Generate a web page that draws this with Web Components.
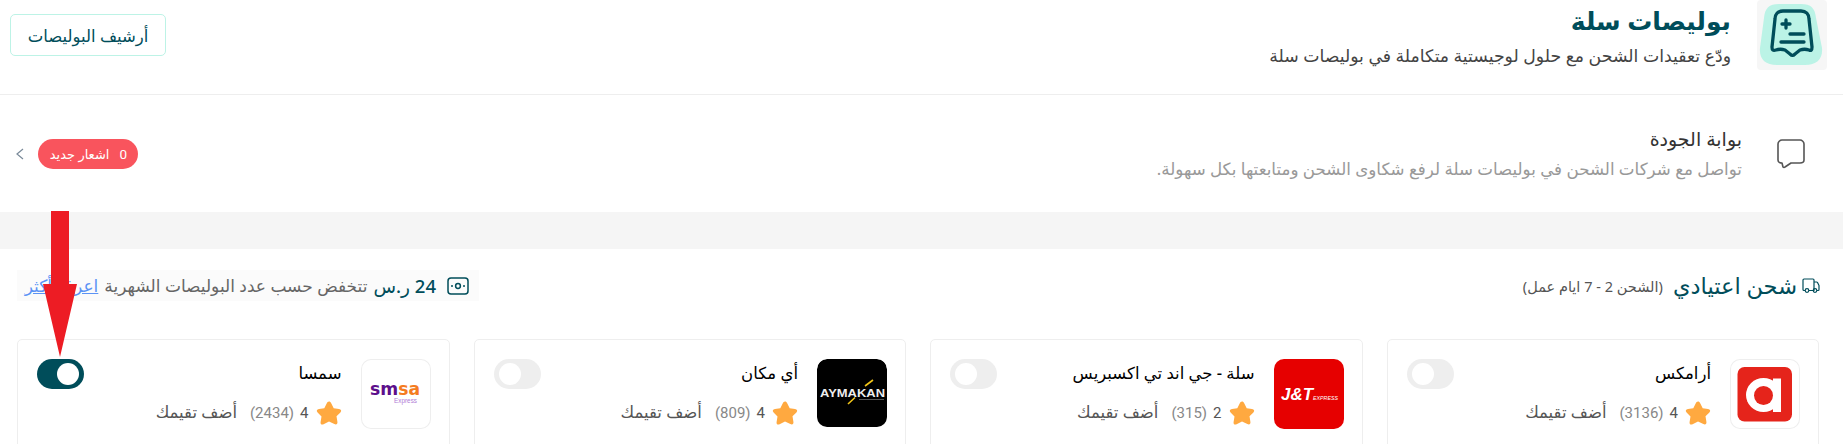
<!DOCTYPE html>
<html lang="ar" dir="rtl">
<head>
<meta charset="utf-8">
<title>بوليصات سلة</title>
<style>
  html, body { margin: 0; padding: 0; background: #fff; }
  body {
    height: 444px;
    overflow: hidden;
    position: relative;
    font-family: "Noto Sans", "DejaVu Sans", sans-serif;
    color: #444;
  }
  .gap { height: 37px; background: #f5f5f5; }
  .cards {
    display: grid;
    grid-template-columns: repeat(4, 1fr);
    gap: 24px;
    padding: 0 24px 0 17px;
    margin-top: 38px;
  }
</style>
</head>
<body>
<policy-header></policy-header>
<quality-row></quality-row>
<div class="gap"></div>
<section-head></section-head>
<div class="cards">
  <carrier-card name="أرامكس" score="4" count="3136" logo="aramex"></carrier-card>
  <carrier-card name="سلة - جي اند تي اكسبريس" score="2" count="315" logo="jt"></carrier-card>
  <carrier-card name="أي مكان" score="4" count="809" logo="aymakan"></carrier-card>
  <carrier-card name="سمسا" score="4" count="2434" logo="smsa" on></carrier-card>
</div>
<red-arrow></red-arrow>

<script>
class PolicyHeader extends HTMLElement {
  connectedCallback() {
    this.shadow = this.attachShadow({ mode: "open" });
    this.shadow.innerHTML = `
      <style>
        :host {
          display: flex;
          align-items: flex-start;
          height: 94px;
          border-bottom: 1px solid #eee;
          padding: 0 16px 0 10px;
        }
        .icon { width: 70px; height: 70px; background: #f6f6f6; border-radius: 4px; flex: none; }
        .text { margin-right: 26px; flex: 1; padding-top: 2px; }
        h1 { margin: 0; font-size: 25px; line-height: 36px; font-weight: 600; color: #004d5a; }
        p { margin: 0; font-size: 17.3px; line-height: 28px; margin-top: 4px; color: #444; }
        button {
          margin-top: 14px;
          height: 42px;
          width: 156px;
          background: #fff;
          border: 1px solid #bdf3e6;
          border-radius: 5px;
          font: inherit;
          font-size: 16.5px;
          color: #004d5a;
        }
      </style>
      <div class="icon">
        <svg width="70" height="70" viewBox="0 0 70 70" fill="none">
          <path d="M22 4h22c10 0 14 4 15 14l6 30c1 11-5 17-17 17H20C8 65 2 59 3 48L7 18C8 8 12 4 22 4z" fill="#bbf3e6"/>
          <path d="M15 47l3-28c0-5 3-8 8-8h18c5 0 8 3 8 8l3 28c0 3-1 4-3 3-3-1-6-1-9 0l-5 4c-2 2-3 2-5 0l-5-4c-3-1-6-1-9 0-3 1-4 0-4-3z" stroke="#004d5a" stroke-width="3.3" stroke-linejoin="round"/>
          <path d="M29 20v8M25 24h8M33 34h14M24 42h23" stroke="#004d5a" stroke-width="3.3" stroke-linecap="round"/>
        </svg>
      </div>
      <div class="text">
        <h1>بوليصات سلة</h1>
        <p>ودّع تعقيدات الشحن مع حلول لوجيستية متكاملة في بوليصات سلة</p>
      </div>
      <button>أرشيف البوليصات</button>
    `;
  }
}

class QualityRow extends HTMLElement {
  connectedCallback() {
    this.shadow = this.attachShadow({ mode: "open" });
    this.shadow.innerHTML = `
      <style>
        :host {
          display: flex;
          align-items: center;
          height: 117px;
          padding: 0 37px 0 16px;
        }
        .chat { width: 30px; height: 32px; flex: none; }
        .text { margin-right: 34px; flex: 1; }
        h2 { margin: 0; font-size: 19px; line-height: 28px; font-weight: 500; color: #333; }
        p { margin: 0; font-size: 16.7px; line-height: 28px; margin-top: 2px; color: #999; }
        .badge {
          display: flex;
          align-items: center;
          gap: 10px;
          height: 30px;
          width: 100px;
          box-sizing: border-box;
          padding: 0 11px 0 12px;
          background: #f9545d;
          color: #fff;
          border-radius: 15px;
          font-size: 13px;
          white-space: nowrap;
        }
        .badge b { font-weight: 400; font-size: 13.5px; font-family: Roboto, sans-serif; }
        .chev { margin-right: 14px; width: 8px; height: 12px; flex: none; }
      </style>
      <svg class="chat" viewBox="0 0 30 32" fill="none">
        <path d="M6 2h18c2 0 4 2 4 4v16c0 2-2 3-4 3h-9l-6 4c-1 1-2 0-2 0l-1-4H6c-2 0-4-1-4-3V6c0-2 2-4 4-4z" stroke="#555" stroke-width="1.6" stroke-linejoin="round"/>
      </svg>
      <div class="text">
        <h2>بوابة الجودة</h2>
        <p>تواصل مع شركات الشحن في بوليصات سلة لرفع شكاوى الشحن ومتابعتها بكل سهولة.</p>
      </div>
      <div class="badge"><b>0</b><span>اشعار جديد</span></div>
      <svg class="chev" viewBox="0 0 8 12" fill="none"><path d="M7 1L1 6l6 5" stroke="#7a8a99" stroke-width="1.2"/></svg>
    `;
  }
}

class SectionHead extends HTMLElement {
  connectedCallback() {
    this.shadow = this.attachShadow({ mode: "open" });
    this.shadow.innerHTML = `
      <style>
        :host {
          display: flex;
          justify-content: space-between;
          align-items: center;
          margin-top: 21px;
          height: 31px;
          padding: 0 23px 0 17px;
        }
        .title { display: flex; align-items: center; }
        .truck { width: 18px; height: 16px; margin-left: 5px; }
        h3 { margin: 0; font-size: 22.5px; font-weight: 500; color: #004d5a; }
        small { font-size: 14.5px; color: #555; margin-right: 10px; }
        .price {
          display: flex;
          align-items: center;
          height: 31px;
          width: 462px;
          box-sizing: border-box;
          padding: 0 10px 0 0;
          background: #fbfbfb;
          font-size: 17px;
          color: #666;
          white-space: nowrap;
        }
        .cash { width: 22px; height: 18px; margin-left: 11px; flex: none; }
        strong { font-weight: 500; font-size: 18.5px; color: #004d5a; margin-left: 6px; }
        a { color: #5b93f5; text-decoration: underline; margin-right: 6px; }
      </style>
      <div class="title">
        <svg class="truck" viewBox="0 0 18 16" fill="none" stroke="#004d5a" stroke-width="1.2">
          <path d="M3 12.500H2c-.6 0-1-.4-1-1V2c0-.6.4-1 1-1h9c.6 0 1 .4 1 1v10.500H7" stroke-linejoin="round"/>
          <path d="M12 4h2.500c.5 0 .8.2 1 .6l1.500 3v4c0 .5-.3.9-.8.9H15" stroke-linejoin="round"/>
          <circle cx="5" cy="12.500" r="1.800"/><circle cx="13" cy="12.500" r="1.800"/>
        </svg>
        <h3>شحن اعتيادي</h3>
        <small>(الشحن 2 - 7 ايام عمل)</small>
      </div>
      <div class="price">
        <svg class="cash" viewBox="0 0 22 18" fill="none" stroke="#004d5a" stroke-width="1.5">
          <rect x="1" y="1" width="20" height="16" rx="3"/>
          <circle cx="11" cy="9" r="2.4"/>
          <path d="M4 9h2M16 9h2"/>
        </svg>
        <strong>24 ر.س</strong>
        <span>تتخفض حسب عدد البوليصات الشهرية</span>
        <a href="#">اعرف أكثر</a>
      </div>
    `;
  }
}

class ToggleSwitch extends HTMLElement {
  connectedCallback() {
    this.shadow = this.attachShadow({ mode: "open" });
    this.shadow.innerHTML = `
      <style>
        :host {
          display: flex;
          align-items: center;
          justify-content: flex-end;
          width: 47px;
          height: 30px;
          box-sizing: border-box;
          padding: 0 5px;
          border-radius: 15px;
          background: #eee;
          flex: none;
        }
        :host([on]) { background: #004d5a; justify-content: flex-start; }
        i { display: block; width: 22px; height: 22px; border-radius: 50%; background: #fff; }
      </style>
      <i></i>
    `;
  }
}

const LOGOS = {
  aramex: `
    <svg width="70" height="70" viewBox="0 0 70 70">
      <rect x="7.500" y="8" width="54.500" height="54.500" rx="7" fill="#e5241b"/>
      <ellipse cx="33.500" cy="36" rx="17.500" ry="17" fill="#fff"/>
      <rect x="43" y="19.500" width="8" height="33.500" fill="#fff"/>
      <circle cx="33.500" cy="36.500" r="9.500" fill="#e5241b"/>
    </svg>`,
  jt: `
    <svg width="70" height="70" viewBox="0 0 70 70" direction="ltr">
      <rect width="70" height="70" rx="5" fill="#e60000"/>
      <text x="7" y="41" fill="#fff" font-family="Liberation Sans" font-weight="700" font-style="italic" font-size="17" textLength="32" lengthAdjust="spacingAndGlyphs">J&amp;T</text>
      <text x="39" y="41" fill="#fff" font-family="Liberation Sans" font-style="italic" font-size="6" textLength="25" lengthAdjust="spacingAndGlyphs">EXPRESS</text>
    </svg>`,
  aymakan: `
    <svg width="70" height="70" viewBox="0 0 70 70" direction="ltr">
      <rect width="70" height="68" rx="10" fill="#000"/>
      <path d="M56 21l-8 6M38 38.500l-7 6.500" stroke="#f0c419" stroke-width="1.600"/>
      <text x="3" y="38" fill="#eee" font-family="Liberation Sans" font-weight="700" font-size="11.500" textLength="65" lengthAdjust="spacingAndGlyphs">AYMAKAN</text>
      <rect x="42" y="40" width="25" height="1" fill="#555"/>
    </svg>`,
  smsa: `
    <svg width="70" height="70" viewBox="0 0 70 70" direction="ltr">
      <text x="9" y="36" font-family="DejaVu Sans" font-weight="700" font-size="17" textLength="50" lengthAdjust="spacingAndGlyphs"><tspan fill="#5c0f8b">sm</tspan><tspan fill="#f47b20">sa</tspan></text>
      <text x="33" y="44" fill="#b07cd6" font-family="Liberation Sans" font-size="7" textLength="23" lengthAdjust="spacingAndGlyphs">Express</text>
    </svg>`
};

class CarrierCard extends HTMLElement {
  connectedCallback() {
    const on = this.hasAttribute('on');
    const logo = this.getAttribute('logo');
    this.shadow = this.attachShadow({ mode: "open" });
    this.shadow.innerHTML = `
      <style>
        :host {
          display: flex;
          align-items: flex-start;
          height: 130px;
          box-sizing: border-box;
          padding: 19px 18px 0 19px;
          border: 1px solid #eee;
          border-radius: 5px;
          background: #fff;
        }
        .logo {
          width: 70px;
          height: 70px;
          box-sizing: border-box;
          border-radius: 10px;
          flex: none;
          overflow: hidden;
        }
        .logo.framed { box-shadow: inset 0 0 0 1px #eee; }
        .info { flex: 1; margin-right: 19px; padding-top: 1px; }
        .name { font-size: 16.5px; line-height: 26px; color: #000; font-weight: 500; }
        .rate { display: flex; align-items: center; margin-top: 14px; font-family: Roboto, sans-serif; }
        .star { width: 26px; height: 26px; flex: none; }
        .score { margin-right: 7px; color: #555; font-size: 15px; }
        .count { margin-right: 6px; color: #888; font-size: 15px; }
        .add { margin-right: 13px; color: #555; font-family: "Noto Sans", "DejaVu Sans", sans-serif; font-size: 16.5px; line-height: 20px; margin-top: -3px; }
      </style>
      <div class="logo ${logo === 'aramex' || logo === 'smsa' ? 'framed' : ''}">${LOGOS[logo]}</div>
      <div class="info">
        <div class="name">${this.getAttribute('name')}</div>
        <div class="rate">
          <svg class="star" viewBox="0 0 26 26"><path d="M13 1.500c1 0 1.700.7 2.200 1.700l2.500 5 5.300.8c2.200.3 2.900 2 1.400 3.500l-3.900 3.800.9 5.500c.4 2.200-1.100 3.300-3 2.300L13 21.500l-5.400 2.700c-1.900 1-3.400-.1-3-2.300l.9-5.500-3.900-3.800C.1 11.100.8 9.400 3 9.100l5.300-.8 2.500-5C11.300 2.200 12 1.500 13 1.500z" fill="#ffa940"/></svg>
          <span class="score" dir="ltr">${this.getAttribute('score')}</span>
          <span class="count" dir="ltr">(${this.getAttribute('count')})</span>
          <span class="add">أضف تقيمك</span>
        </div>
      </div>
      <toggle-switch ${on ? 'on' : ''}></toggle-switch>
    `;
  }
}

class RedArrow extends HTMLElement {
  connectedCallback() {
    this.shadow = this.attachShadow({ mode: "open" });
    this.shadow.innerHTML = `
      <style>
        :host { position: absolute; left: 43px; top: 211px; width: 34px; height: 147px; display: block; pointer-events: none; }
        svg { display: block; }
      </style>
      <svg width="34" height="147" viewBox="0 0 34 147"><path d="M8 0h18v73h8L17 146 0 73h8z" fill="#ed1c24"/></svg>
    `;
  }
}

customElements.define('toggle-switch', ToggleSwitch);
customElements.define('carrier-card', CarrierCard);
customElements.define('policy-header', PolicyHeader);
customElements.define('quality-row', QualityRow);
customElements.define('section-head', SectionHead);
customElements.define('red-arrow', RedArrow);
</script>
</body>
</html>
